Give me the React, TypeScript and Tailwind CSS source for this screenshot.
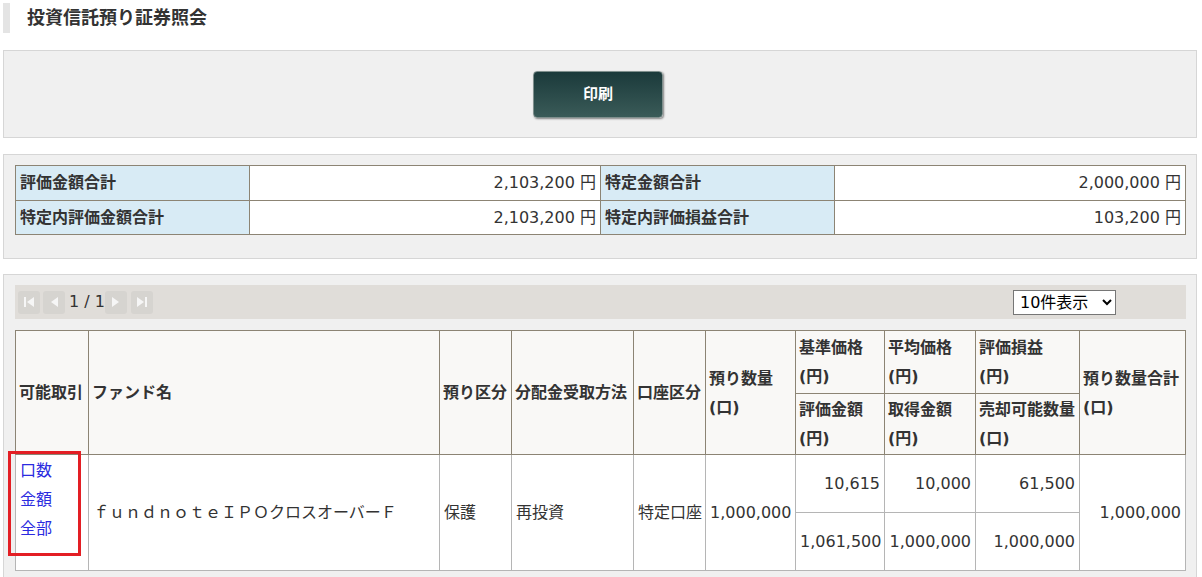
import React from "react";

const FONT = "font-['DejaVu_Sans','Noto_Sans_CJK_JP',sans-serif]";

function PagerBtn({ kind }: { kind: "first" | "prev" | "next" | "last" }) {
  return (
    <div className="w-[22px] h-[23px] rounded-[3px] bg-[#d6d4d0] flex items-center justify-center">
      <svg width="14" height="14" viewBox="0 0 14 14">
        {kind === "first" && (
          <>
            <rect x="2" y="2" width="2" height="10" fill="#f6f6f6" />
            <polygon points="12,2 12,12 5,7" fill="#f6f6f6" />
          </>
        )}
        {kind === "prev" && <polygon points="11,2 11,12 4,7" fill="#f6f6f6" />}
        {kind === "next" && <polygon points="3,2 3,12 10,7" fill="#f6f6f6" />}
        {kind === "last" && (
          <>
            <polygon points="2,2 2,12 9,7" fill="#f6f6f6" />
            <rect x="10" y="2" width="2" height="10" fill="#f6f6f6" />
          </>
        )}
      </svg>
    </div>
  );
}

export default function App() {
  const th = "border border-[#8c8474] bg-[#f9f8f6] px-[3px] text-left align-middle font-bold leading-[29px] whitespace-nowrap";
  const td = "border border-[#b5b5b5] bg-white px-[4px] align-middle leading-[29px] whitespace-nowrap";
  return (
    <div className={`relative w-[1202px] bg-white text-[#333] text-[16px] ${FONT}`}>
      <div className="px-[3px] pt-[3px] pr-[5px]">
        {/* title */}
        <div className="h-[30px] border-l-[7px] border-[#e4e4e4] pl-[17px] flex items-center text-[18px] font-bold leading-none">
          投資信託預り証券照会
        </div>

        {/* print panel */}
        <div className="mt-[17px] h-[88px] border border-[#d6d6d6] bg-[#f0f0f0] flex items-center justify-center">
          <button className="w-[130px] h-[47px] rounded-[4px] border border-[#7f8f8d] bg-linear-to-b from-[#1b3a3b] to-[#3a5b58] text-white font-bold text-[15px] shadow-[1px_1px_2px_rgba(0,0,0,0.45)] mr-[4px]">
            印刷
          </button>
        </div>

        {/* summary panel */}
        <div className="mt-[16px] border border-[#d6d6d6] bg-[#f0f0f0] pl-[11px] pr-[10px] pt-[10px] pb-[23px]">
          <table className="w-full table-fixed border-collapse">
            <colgroup>
              <col className="w-[234px]" />
              <col className="w-[351px]" />
              <col className="w-[234px]" />
              <col />
            </colgroup>
            <tbody>
              <tr className="h-[35px]">
                <td className="border border-[#8c8474] bg-[#d8ebf5] px-[4px] font-bold">評価金額合計</td>
                <td className="border border-[#8c8474] bg-white px-[4px] text-right">2,103,200 円</td>
                <td className="border border-[#8c8474] bg-[#d8ebf5] px-[4px] font-bold">特定金額合計</td>
                <td className="border border-[#8c8474] bg-white px-[4px] text-right">2,000,000 円</td>
              </tr>
              <tr className="h-[34px]">
                <td className="border border-[#8c8474] bg-[#d8ebf5] px-[4px] font-bold">特定内評価金額合計</td>
                <td className="border border-[#8c8474] bg-white px-[4px] text-right">2,103,200 円</td>
                <td className="border border-[#8c8474] bg-[#d8ebf5] px-[4px] font-bold">特定内評価損益合計</td>
                <td className="border border-[#8c8474] bg-white px-[4px] text-right">103,200 円</td>
              </tr>
            </tbody>
          </table>
        </div>

        {/* list panel */}
        <div className="mt-[15px] border border-[#d6d6d6] bg-[#f0f0f0] pl-[11px] pr-[10px] pt-[10px] pb-[20px]">
          <div className="h-[34px] bg-[#e0ddd9] flex items-center justify-between pl-[3px] pr-[70px]">
            <div className="flex items-center">
              <PagerBtn kind="first" />
              <div className="ml-[3px]"><PagerBtn kind="prev" /></div>
              <span className="ml-[4px] text-[16px] leading-none text-[#333]">1 / 1</span>
              <PagerBtn kind="next" />
              <div className="ml-[4px]"><PagerBtn kind="last" /></div>
            </div>
            <select className={`w-[103px] h-[25px] border border-[#767676] bg-white text-[16px] text-black pl-[2px] ${FONT}`} defaultValue="10">
              <option value="10">10件表示</option>
              <option value="20">20件表示</option>
              <option value="50">50件表示</option>
            </select>
          </div>

          <table className="mt-[11px] w-full table-fixed border-collapse">
            <colgroup>
              <col className="w-[73px]" />
              <col className="w-[351px]" />
              <col className="w-[72px]" />
              <col className="w-[122px]" />
              <col className="w-[72px]" />
              <col className="w-[90px]" />
              <col className="w-[89px]" />
              <col className="w-[91px]" />
              <col className="w-[104px]" />
              <col />
            </colgroup>
            <thead>
              <tr className="h-[63px]">
                <th rowSpan={2} className={th}>可能取引</th>
                <th rowSpan={2} className={th}>ファンド名</th>
                <th rowSpan={2} className={th}>預り区分</th>
                <th rowSpan={2} className={th}>分配金受取方法</th>
                <th rowSpan={2} className={th}>口座区分</th>
                <th rowSpan={2} className={th}>預り数量<br />(口)</th>
                <th className={th}>基準価格<br />(円)</th>
                <th className={th}>平均価格<br />(円)</th>
                <th className={th}>評価損益<br />(円)</th>
                <th rowSpan={2} className={th}>預り数量合計<br />(口)</th>
              </tr>
              <tr className="h-[61px]">
                <th className={th}>評価金額<br />(円)</th>
                <th className={th}>取得金額<br />(円)</th>
                <th className={th}>売却可能数量<br />(口)</th>
              </tr>
            </thead>
            <tbody>
              <tr className="h-[58px]">
                <td rowSpan={2} className={`${td} align-top pt-[1px] leading-[28px]`}>
                  <div className="flex flex-col text-[#2b2be0]">
                    <a href="#" className="w-fit">口数</a>
                    <a href="#" className="w-fit">金額</a>
                    <a href="#" className="w-fit">全部</a>
                  </div>
                </td>
                <td rowSpan={2} className={td}>ｆｕｎｄｎｏｔｅＩＰＯクロスオーバーＦ</td>
                <td rowSpan={2} className={td}>保護</td>
                <td rowSpan={2} className={td}>再投資</td>
                <td rowSpan={2} className={`${td} px-[3px]`}>特定口座</td>
                <td rowSpan={2} className={`${td} text-right px-[3px]`}>1,000,000</td>
                <td className={`${td} text-right px-[3px]`}>10,615</td>
                <td className={`${td} text-right px-[3px]`}>10,000</td>
                <td className={`${td} text-right px-[3px]`}>61,500</td>
                <td rowSpan={2} className={`${td} text-right px-[3px]`}>1,000,000</td>
              </tr>
              <tr className="h-[58px]">
                <td className={`${td} text-right px-[3px]`}>1,061,500</td>
                <td className={`${td} text-right px-[3px]`}>1,000,000</td>
                <td className={`${td} text-right px-[3px]`}>1,000,000</td>
              </tr>
            </tbody>
          </table>
        </div>
      </div>

      {/* annotation */}
      <div className="absolute left-[8px] top-[451px] w-[73px] h-[105px] border-[3px] border-[#e31e24] pointer-events-none" />
    </div>
  );
}
